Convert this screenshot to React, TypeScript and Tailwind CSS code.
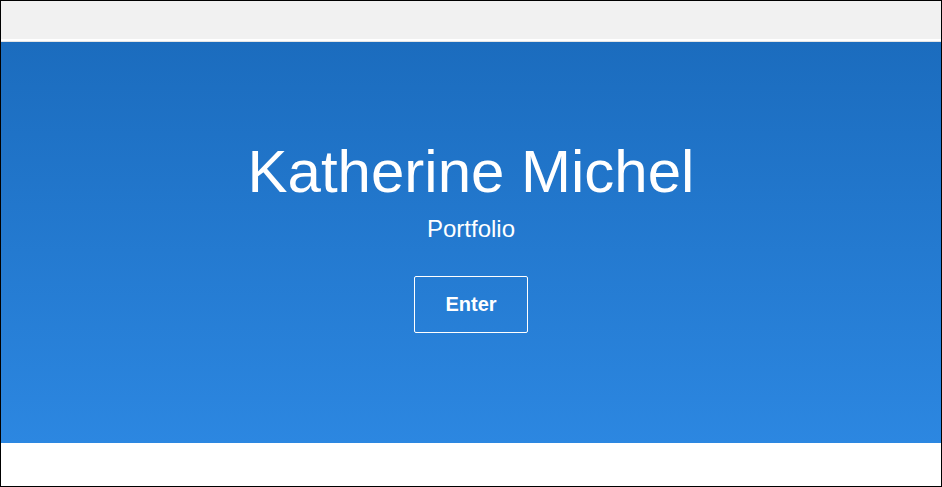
import React from 'react';

function App() {
  return (
    <div
      className="w-[942px] h-[487px] border border-black bg-white flex flex-col overflow-hidden"
      style={{ fontFamily: '"Liberation Sans", Arial, sans-serif' }}
    >
      {/* Top bar */}
      <div className="h-[38px] bg-[#f1f1f1]" />
      <div className="h-[2px] bg-white" />
      <div className="h-px bg-[#e4e4e4]" />

      {/* Hero */}
      <section className="h-[401px] bg-gradient-to-b from-[#1b6cbe] to-[#2c87e1] flex flex-col items-center justify-center pb-[11px] text-white">
        <h1 className="text-[60px] leading-none font-normal">Katherine Michel</h1>
        <p className="text-2xl leading-[36px] mt-[9px]">Portfolio</p>
        <a
          href="#"
          className="mt-[29px] w-[114px] h-[57px] border border-white rounded-[2px] flex items-center justify-center text-xl font-bold"
        >
          Enter
        </a>
      </section>
    </div>
  );
}

export default App;
